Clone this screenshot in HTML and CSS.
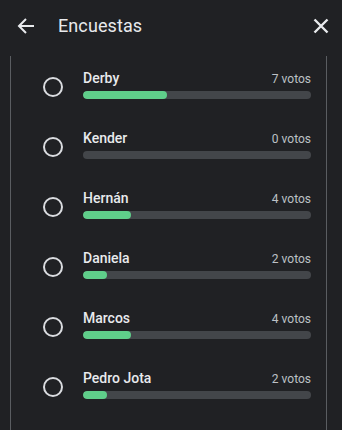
FILE: index.html
```html
<!DOCTYPE html>
<html lang="es">
<head>
<meta charset="utf-8">
<link rel="stylesheet" href="styles.css">
</head>
<body>
<div class="app">
  <header class="header">
    <button class="icon-btn back" aria-label="Atrás">
      <svg width="20" height="20" viewBox="0 0 20 20"><path d="M18 10H3.5M10 3L3 10l7 7" fill="none" stroke="#e8eaed" stroke-width="2"/></svg>
    </button>
    <h1 class="title">Encuestas</h1>
    <button class="icon-btn close" aria-label="Cerrar">
      <svg width="16" height="16" viewBox="0 0 16 16"><path d="M1.5 1.5l13 13M14.5 1.5l-13 13" fill="none" stroke="#e8eaed" stroke-width="2.4"/></svg>
    </button>
  </header>
  <div class="panel">
    <div class="option">
      <span class="radio"></span>
      <div class="body">
        <div class="top"><span class="name">Derby</span><span class="votes">7 votos</span></div>
        <div class="track"><div class="fill" style="width:36.8%"></div></div>
      </div>
    </div>
    <div class="option">
      <span class="radio"></span>
      <div class="body">
        <div class="top"><span class="name">Kender</span><span class="votes">0 votos</span></div>
        <div class="track"><div class="fill" style="width:0%"></div></div>
      </div>
    </div>
    <div class="option">
      <span class="radio"></span>
      <div class="body">
        <div class="top"><span class="name">Hernán</span><span class="votes">4 votos</span></div>
        <div class="track"><div class="fill" style="width:21%"></div></div>
      </div>
    </div>
    <div class="option">
      <span class="radio"></span>
      <div class="body">
        <div class="top"><span class="name">Daniela</span><span class="votes">2 votos</span></div>
        <div class="track"><div class="fill" style="width:10.5%"></div></div>
      </div>
    </div>
    <div class="option">
      <span class="radio"></span>
      <div class="body">
        <div class="top"><span class="name">Marcos</span><span class="votes">4 votos</span></div>
        <div class="track"><div class="fill" style="width:21%"></div></div>
      </div>
    </div>
    <div class="option">
      <span class="radio"></span>
      <div class="body">
        <div class="top"><span class="name">Pedro Jota</span><span class="votes">2 votos</span></div>
        <div class="track"><div class="fill" style="width:10.5%"></div></div>
      </div>
    </div>
  </div>
</div>
</body>
</html>
```

FILE: styles.css
```css
* { box-sizing: border-box; }
html, body {
  margin: 0;
  padding: 0;
  background: #202124;
  height: 100%;
  overflow: hidden;
}
body {
  font-family: Roboto, "Noto Sans", "Liberation Sans", sans-serif;
  color: #e8eaed;
}
.app {
  width: 342px;
  height: 430px;
  display: flex;
  flex-direction: column;
}
.header {
  height: 50px;
  display: flex;
  align-items: center;
  padding: 1px 13px 0 16px;
  flex-shrink: 0;
}
.icon-btn {
  background: none;
  border: 0;
  padding: 0;
  display: flex;
  align-items: center;
  justify-content: center;
  cursor: pointer;
}
.back { width: 20px; height: 20px; }
.close { width: 16px; height: 16px; }
.title {
  margin: 0 0 0 22px;
  flex: 1;
  font-size: 18px;
  font-weight: 400;
  color: #e8eaed;
  line-height: 24px;
  letter-spacing: 0.1px;
}
.panel {
  margin: 6px 0 0 10px;
  width: 317px;
  flex: 1;
  border-left: 1px solid #5a5d61;
  border-right: 1px solid #5a5d61;
  padding: 1px 15px 0 32px;
}
.option {
  height: 60px;
  display: flex;
  align-items: flex-start;
  padding-top: 13px;
}
.radio {
  width: 20px;
  height: 20px;
  border: 2px solid #dadce0;
  border-radius: 50%;
  margin-top: 7px;
  flex-shrink: 0;
}
.body {
  flex: 1;
  margin-left: 20px;
}
.top {
  display: flex;
  justify-content: space-between;
  align-items: baseline;
  line-height: 16px;
}
.name {
  font-size: 14px;
  font-weight: 500;
  color: #e8eaed;
}
.votes {
  font-size: 12px;
  color: #bdc1c6;
}
.track {
  margin-top: 4px;
  height: 8px;
  border-radius: 4px;
  background: #43464a;
  overflow: hidden;
}
.fill {
  height: 100%;
  border-radius: 4px;
  background: #5fce8a;
}
```
